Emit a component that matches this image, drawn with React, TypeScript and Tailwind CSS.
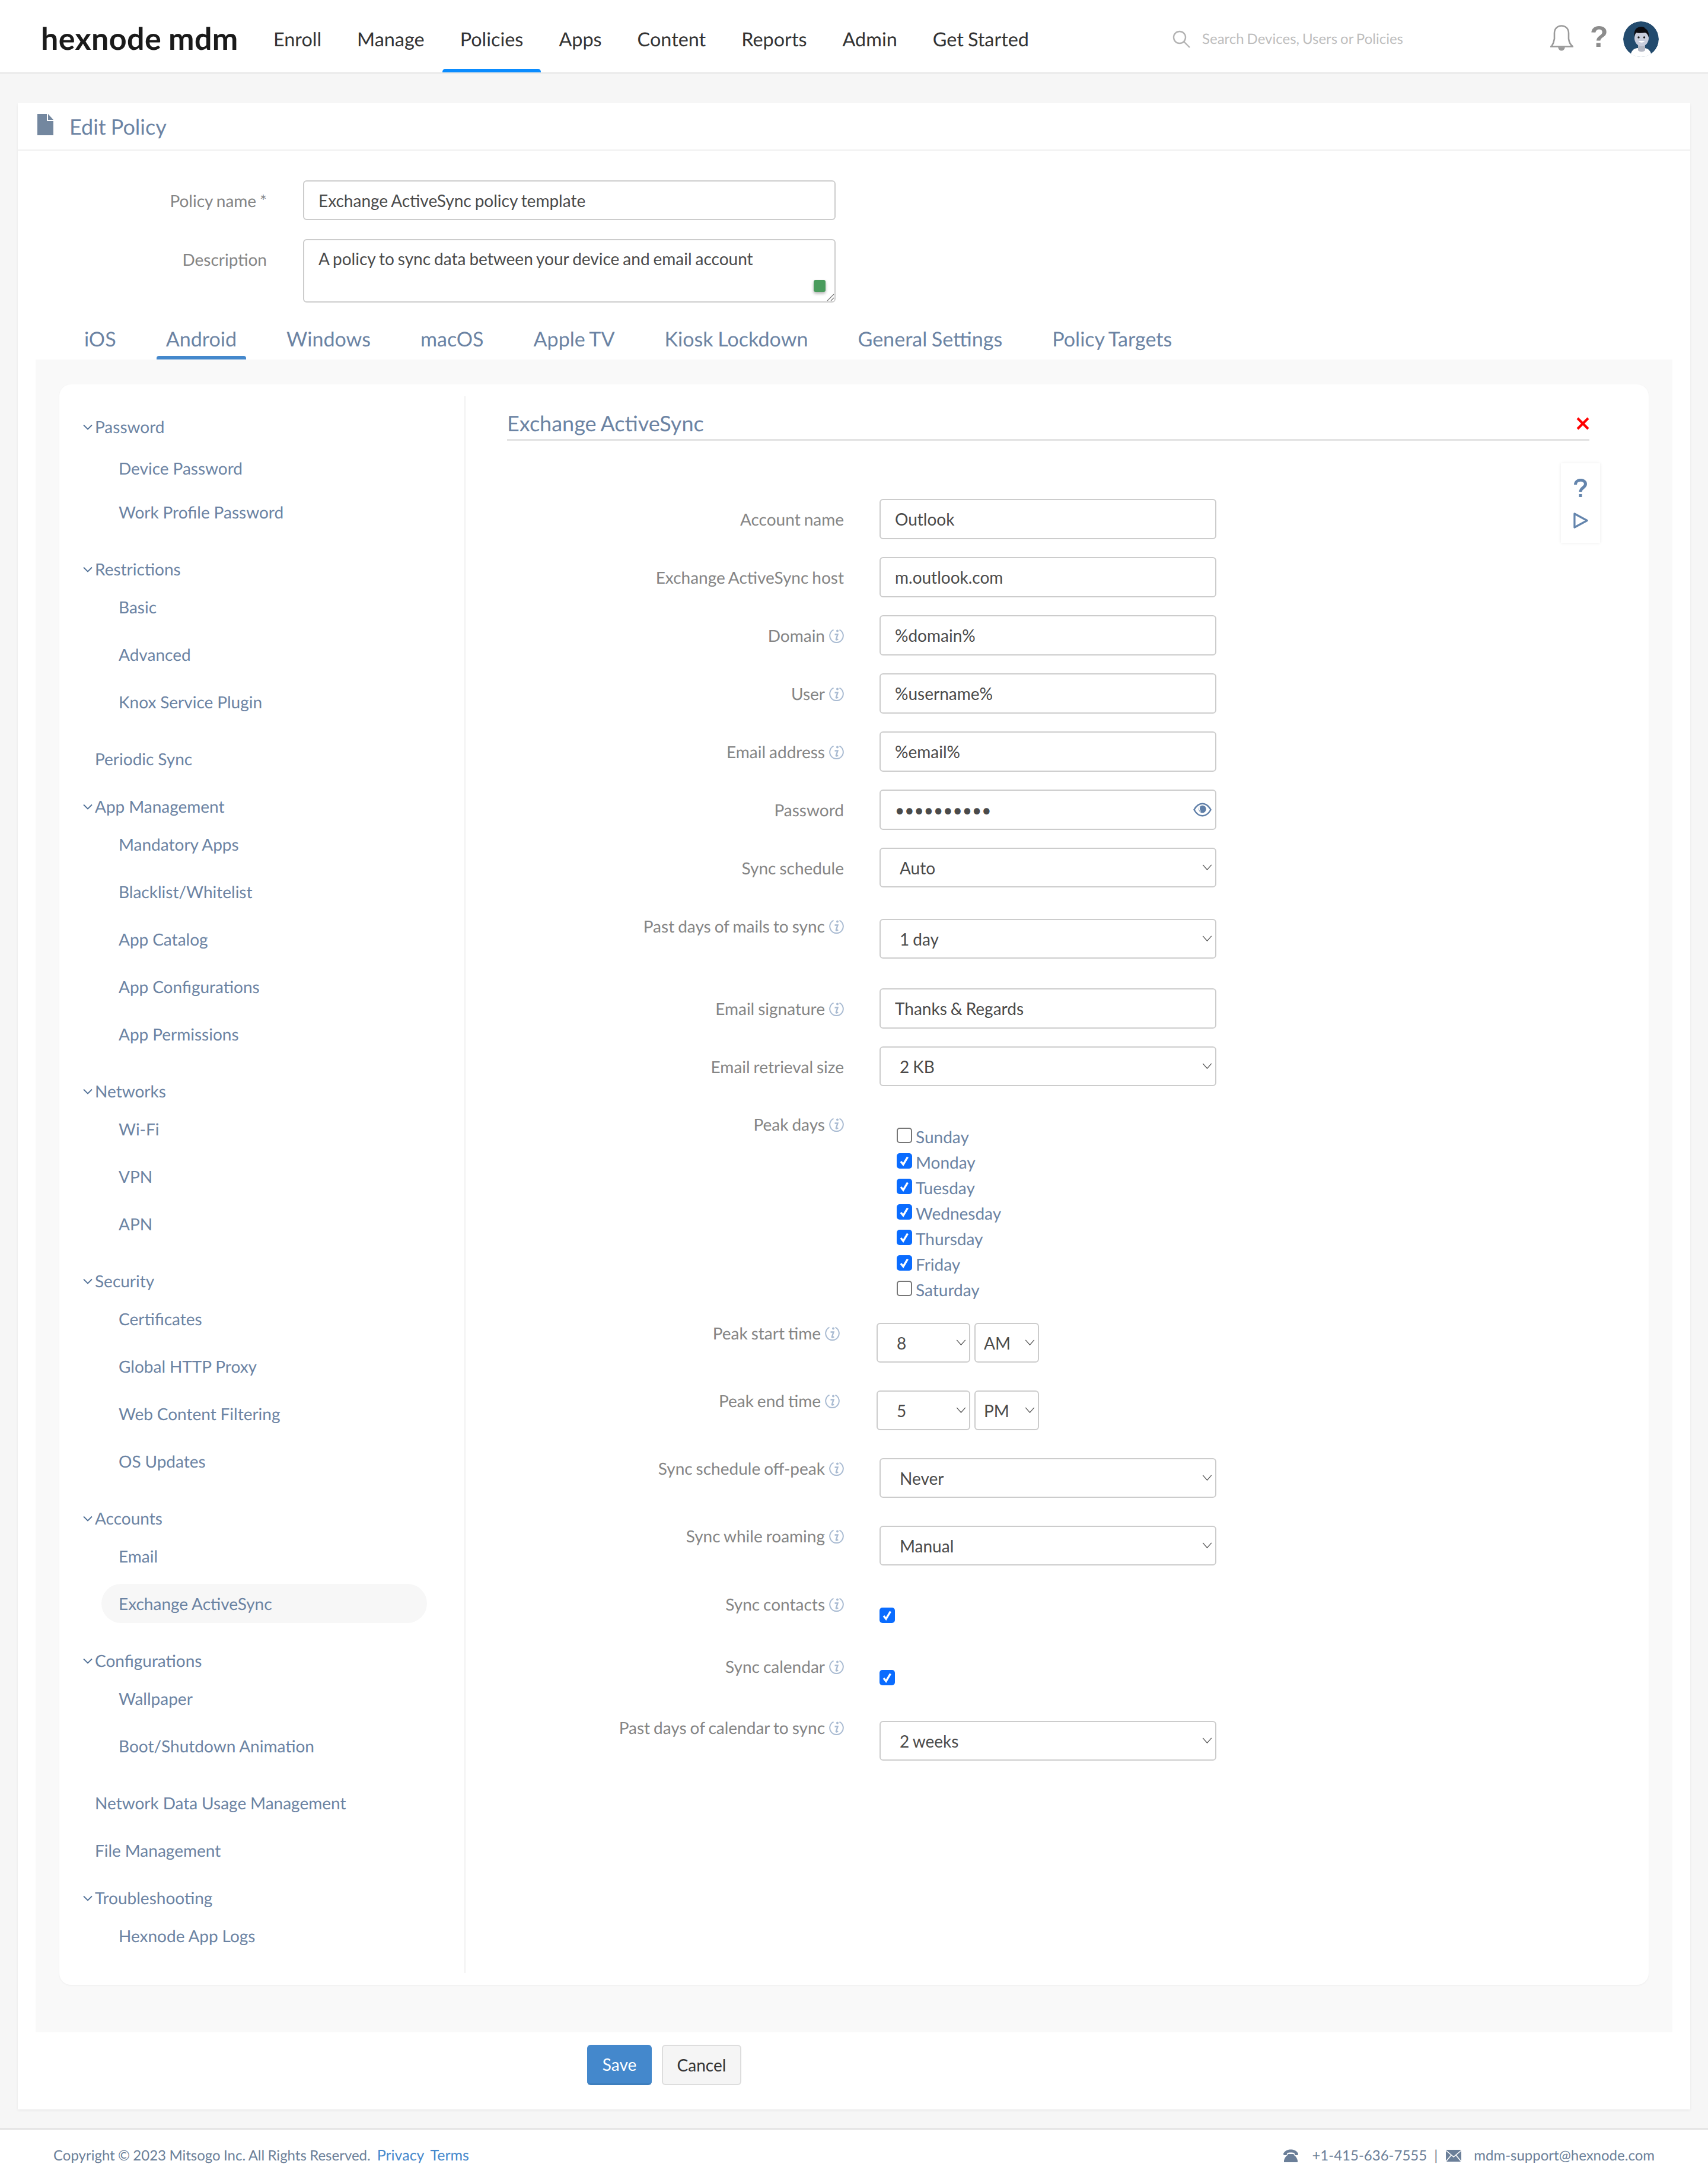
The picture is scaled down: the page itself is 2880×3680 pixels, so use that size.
import { ReactNode } from "react";

const navItems = ["Enroll", "Manage", "Policies", "Apps", "Content", "Reports", "Admin", "Get Started"];
const tabs = ["iOS", "Android", "Windows", "macOS", "Apple TV", "Kiosk Lockdown", "General Settings", "Policy Targets"];

const menu = [
  { title: "Restrictions", items: ["Basic", "Advanced", "Knox Service Plugin"] },
  { title: "Periodic Sync", items: [] },
  { title: "App Management", items: ["Mandatory Apps", "Blacklist/Whitelist", "App Catalog", "App Configurations", "App Permissions"] },
  { title: "Networks", items: ["Wi-Fi", "VPN", "APN"] },
  { title: "Security", items: ["Certificates", "Global HTTP Proxy", "Web Content Filtering", "OS Updates"] },
  { title: "Accounts", items: ["Email", "Exchange ActiveSync"] },
  { title: "Configurations", items: ["Wallpaper", "Boot/Shutdown Animation"] },
  { title: "Network Data Usage Management", items: [] },
  { title: "File Management", items: [] },
  { title: "Troubleshooting", items: ["Hexnode App Logs"] },
];

const days = [
  { name: "Sunday", on: false },
  { name: "Monday", on: true },
  { name: "Tuesday", on: true },
  { name: "Wednesday", on: true },
  { name: "Thursday", on: true },
  { name: "Friday", on: true },
  { name: "Saturday", on: false },
];

function MenuChevron() {
  return (
    <svg viewBox="0 0 16 10" className="w-[16px] h-[10px] absolute left-[-20px] top-[20px]" fill="none" stroke="#4f6f96" strokeWidth="1.8">
      <path d="M1 1.5 8 8.5 15 1.5" />
    </svg>
  );
}

function MenuHeading({ title, expandable }: { title: string; expandable: boolean }) {
  return (
    <div className="relative h-[48px] ml-[60px] flex items-center">
      {expandable && <MenuChevron />}
      {title}
    </div>
  );
}

function MenuItem({ label, active, className = "" }: { label: string; active?: boolean; className?: string }) {
  return (
    <div className={`h-[80px] flex items-center ${className}`}>
      <div className={`flex items-center h-[66px] w-[549px] ml-[71px] pl-[29px] rounded-full ${active ? "bg-[#f7f7f7]" : ""}`}>
        {label}
      </div>
    </div>
  );
}

function InfoIcon() {
  return (
    <svg viewBox="0 0 25 25" className="w-[25px] h-[25px] shrink-0" fill="none" stroke="#a9bbd2" strokeWidth="2">
      <path d="M7.5 2.6A11.3 11.3 0 1 0 17.5 2.6" />
      <circle cx="14" cy="4.5" r="2" fill="#a9bbd2" stroke="none" />
      <path d="M9.5 10.5h5l-2.6 8c-.3 1.2 1 1.4 3.4 0" strokeWidth="2.4" />
    </svg>
  );
}

function Row({ label, info, labelClass = "h-[68px]", children }: { label: string; info?: boolean; labelClass?: string; children: ReactNode }) {
  return (
    <div className="flex items-start">
      <div className={`w-[568px] flex items-center justify-end gap-[7px] text-[#858585] ${labelClass}`}>
        <span>{label}</span>
        {info && <InfoIcon />}
      </div>
      <div className="ml-[60px]">{children}</div>
    </div>
  );
}

function TextInput({ value, className = "" }: { value: string; className?: string }) {
  return (
    <input
      readOnly
      value={value}
      className={`block w-[568px] h-[68px] border-2 border-[#cccccc] rounded-[6px] px-[24px] text-[#4a4a4a] bg-white outline-none [word-spacing:-1.2px] ${className}`}
    />
  );
}

function SelectBox({ value, className = "w-[568px] h-[67px]", textClass = "pl-[32px]" }: { value: string; className?: string; textClass?: string }) {
  return (
    <div className={`relative ${className}`}>
      <select
        defaultValue={value}
        className={`block w-full h-full appearance-none border-2 border-[#cccccc] rounded-[6px] bg-white text-[#4a4a4a] outline-none [word-spacing:-1.2px] ${textClass}`}
      >
        <option>{value}</option>
      </select>
      <svg viewBox="0 0 18 11" className="absolute right-[7px] top-[28px] w-[17px] h-[10px]" fill="none" stroke="#555555" strokeWidth="1.5">
        <path d="M1 1 9 10 17 1" />
      </svg>
    </div>
  );
}

function CheckBox({ on }: { on: boolean }) {
  if (!on) {
    return <span className="block w-[26px] h-[26px] rounded-[5px] border-2 border-[#767676] bg-white" />;
  }
  return (
    <span className="flex items-center justify-center w-[26px] h-[26px] rounded-[5px] bg-[#0a6cff]">
      <svg viewBox="0 0 20 20" className="w-[20px] h-[20px]" fill="none" stroke="#ffffff" strokeWidth="3.4">
        <path d="M4 11 8 16 15.5 3.5" />
      </svg>
    </span>
  );
}

export default function App() {
  return (
    <div className="w-[2880px] min-h-[3680px] bg-[#f6f6f6] text-[28px] font-['Lato',sans-serif] [text-rendering:geometricPrecision] [word-spacing:-1.2px] flex flex-col">
      {/* top bar */}
      <header className="h-[124px] bg-white border-b-2 border-[#e6e6e6] flex items-start relative">
        <div className="ml-[69px] mt-[33px] w-[362px] text-[#1a1a1a] font-bold text-[52px] leading-[64px] tracking-[0.4px]">hexnode mdm</div>
        <nav className="flex h-[122px] text-[#333] text-[32.4px]">
          {navItems.map((n) => (
            <div key={n} className="relative px-[30px] pt-[10px] flex items-center">
              {n}
              {n === "Policies" && <span className="absolute left-0 right-0 bottom-0 h-[6px] rounded-t-[5px] bg-[#0a8cff]" />}
            </div>
          ))}
        </nav>
        <div className="ml-[212px] h-[122px] pt-[10px] flex items-center">
          <svg viewBox="0 0 30 30" className="w-[30px] h-[30px]" fill="none" stroke="#b3b3b3" strokeWidth="2.4">
            <circle cx="12" cy="12" r="10" />
            <path d="M19 19 29 29" />
          </svg>
          <span className="ml-[20px] text-[24px] text-[#bdbdbd]">Search Devices, Users or Policies</span>
        </div>
        <div className="absolute left-[2613px] top-[36px] flex items-start">
          <svg viewBox="0 0 40 44" className="w-[40px] h-[44px] mt-[6px]" fill="none" stroke="#9a9a9a" strokeWidth="2.6">
            <path d="M1 36.5h38c-4-3-6-6-7-13V14C32 6.5 27 1.5 20 1.5S8 6.5 8 14v9.500c-1 7-3 10-5 13" />
            <path d="M14 37.5c1 4 3 6 6 6s5-2 6-6z" fill="#9a9a9a" stroke="none" />
          </svg>
          <span className="ml-[28px] mt-[1px] text-[50px] leading-[50px] text-[#8c8c8c] font-bold font-['Liberation_Sans',sans-serif]">?</span>
          <svg viewBox="0 0 60 60" className="absolute left-[124px] top-[0px] w-[60px] h-[60px]">
            <defs>
              <clipPath id="avatar-clip"><circle cx="30" cy="30" r="30" /></clipPath>
            </defs>
            <g clipPath="url(#avatar-clip)">
              <circle cx="30" cy="30" r="30" fill="#234b6e" />
              <path d="M12 60c1-10 5-14 12-15h12c7 1 11 5 12 15z" fill="#ffffff" />
              <path d="M25 38h12v11c-3 3-9 3-12 0z" fill="#b4b8c4" />
              <ellipse cx="31" cy="28" rx="12" ry="14" fill="#c9cddc" />
              <path d="M19 27c-2-12 3-18 12-18 3 0 5 1 6 3 4 2 7 7 6 15-1-4-3-7-6-8-6 1-13 1-15 0-2 2-3 5-3 8z" fill="#0b0b10" />
              <circle cx="26" cy="27" r="1.7" fill="#1a1a1a" />
              <circle cx="35.5" cy="27" r="1.7" fill="#1a1a1a" />
              <path d="M25.5 33c3 3.500 8 3.500 11 0z" fill="#ffffff" />
            </g>
          </svg>
        </div>
      </header>

      <main className="mt-[50px] mx-[30px] min-h-[3382px] bg-white shadow-[0_2px_4px_rgba(0,0,0,0.06)]">
        {/* panel header */}
        <div className="h-[80px] border-b-2 border-[#f0f0f0] flex items-center pl-[33px] text-[#6b83a3] text-[36px]">
          <svg viewBox="0 0 27 36" className="w-[27px] h-[36px] -mt-[6px]">
            <path d="M0 0h16v12h11v24H0z" fill="#73879f" />
            <path d="M18 0l9 10h-9z" fill="#73879f" />
          </svg>
          <span className="ml-[27px]">Edit Policy</span>
        </div>

        {/* policy fields */}
        <div className="flex mt-[50px]">
          <div className="w-[420px] h-[68px] flex items-center justify-end text-[#858585]">Policy name *</div>
          <input readOnly value="Exchange ActiveSync policy template" className="block ml-[61px] w-[898px] h-[67px] border-2 border-[#cccccc] rounded-[6px] px-[24px] text-[#4a4a4a] outline-none [word-spacing:-1.2px]" />
        </div>
        <div className="flex mt-[31px]">
          <div className="w-[420px] h-[68px] flex items-center justify-end text-[#858585]">Description</div>
          <div className="relative ml-[61px] w-[898px] h-[107px]">
            <textarea readOnly value="A policy to sync data between your device and email account" className="block w-full h-full border-2 border-[#cccccc] rounded-[6px] px-[24px] py-[13px] text-[#4a4a4a] leading-[36px] outline-none resize-none [word-spacing:-1.2px]" />
            <span className="absolute left-[861px] top-[69px] w-[20px] h-[20px] rounded-[3px] bg-[#4a9c5d] shadow-[0_3px_5px_rgba(0,0,0,0.3)]" />
            <svg viewBox="0 0 14 14" className="absolute right-[2px] bottom-[2px] w-[14px] h-[14px]" fill="none" stroke="#777777" strokeWidth="1.2">
              <path d="M2 13 13 2M8 13 13 8" />
            </svg>
          </div>
        </div>

        {/* tabs */}
        <div className="flex gap-[52px] mt-[37px] ml-[96px] h-[59px] text-[#6b83a3] text-[34.1px]">
          {tabs.map((t) => (
            <div key={t} className="relative px-[16px] flex items-center pb-[10px]">
              {t}
              {t === "Android" && <span className="absolute left-0 right-0 bottom-0 h-[6px] rounded-t-[4px] bg-[#4488cc]" />}
            </div>
          ))}
        </div>

        {/* settings area */}
        <div className="mx-[30px] min-h-[2820px] bg-[#f9f9f9] pt-[42px] px-[40px]">
          <div className="flex h-[2698px] bg-white rounded-[20px] shadow-[0_1px_3px_rgba(0,0,0,0.05)] py-[20px]">
            <aside className="w-[685px] border-r-2 border-[#f2f2f2] text-[#6b83a3] pt-[27px] [word-spacing:-0.3px]">
              <div className="mb-[32px]">
                <MenuHeading title="Password" expandable />
                <MenuItem label="Device Password" className="mt-[6px]" />
                <MenuItem label="Work Profile Password" className="-mt-[6px]" />
              </div>
              {menu.map((m) => (
                <div key={m.title} className="mb-[32px]">
                  <MenuHeading title={m.title} expandable={m.items.length > 0} />
                  {m.items.map((i) => (
                    <MenuItem key={i} label={i} active={i === "Exchange ActiveSync"} />
                  ))}
                </div>
              ))}
            </aside>

            <section className="relative flex-1 pl-[70px] pt-[20px]">
              <div className="w-[1825px] h-[55px] border-b-[3px] border-[#e3e3e3] text-[36px] leading-[50px] text-[#6b83a3]">Exchange ActiveSync</div>
              <svg viewBox="0 0 22 22" className="absolute left-[1873px] top-[35px] w-[22px] h-[22px]" fill="none" stroke="#ff0000" strokeWidth="4.2">
                <path d="M2 2 20 20M20 2 2 20" />
              </svg>
              <div className="absolute left-[1847px] top-[113px] w-[66px] h-[134px] bg-white shadow-[0_0_6px_rgba(0,0,0,0.08)] flex flex-col items-center">
                <svg viewBox="0 0 22 32" className="w-[22px] h-[32px] mt-[26px]" fill="none" stroke="#6485ad" strokeWidth="5">
                  <path d="M2.500 10c0-10 17-10 17-1 0 6-8.500 6-8.500 13" />
                  <path d="M11 26v5" />
                </svg>
                <svg viewBox="0 0 26 28" className="w-[25px] h-[27px] mt-[25px]" fill="none" stroke="#6485ad" strokeWidth="3.4" strokeLinejoin="round">
                  <path d="M2 2 24 14 2 26z" />
                </svg>
              </div>

              <div className="mt-[98px] flex flex-col">
                <Row label="Account name"><TextInput value="Outlook" /></Row>
                <div className="mt-[30px]"><Row label="Exchange ActiveSync host"><TextInput value="m.outlook.com" /></Row></div>
                <div className="mt-[30px]"><Row label="Domain" info><TextInput value="%domain%" /></Row></div>
                <div className="mt-[30px]"><Row label="User" info><TextInput value="%username%" /></Row></div>
                <div className="mt-[30px]"><Row label="Email address" info><TextInput value="%email%" /></Row></div>
                <div className="mt-[30px]">
                  <Row label="Password">
                    <div className="relative">
                      <input readOnly type="password" value="0123456789" className="block w-[568px] h-[68px] border-2 border-[#cccccc] rounded-[6px] px-[24px] text-[#4a4a4a] outline-none" />
                      <svg viewBox="0 0 32 26" className="absolute left-[529px] top-[21px] w-[31px] h-[26px]" fill="none" stroke="#5f7fa8" strokeWidth="2.6">
                        <path d="M1.5 13C6 5 11 2.500 16 2.500S26 5 30.5 13C26 21 21 23.5 16 23.5S6 21 1.500 13z" />
                        <circle cx="16" cy="12" r="6.5" fill="#5f7fa8" stroke="none" />
                        <path d="M12 7c-2 2-2 7 1 9" stroke="#ffffff" strokeWidth="1.4" />
                      </svg>
                    </div>
                  </Row>
                </div>
                <div className="mt-[30px]"><Row label="Sync schedule"><SelectBox value="Auto" /></Row></div>
                <div className="mt-[52px]"><Row label="Past days of mails to sync" info labelClass="h-[40px] -mt-[8px]"><SelectBox value="1 day" /></Row></div>
                <div className="mt-[50px]"><Row label="Email signature" info><TextInput value="Thanks & Regards" /></Row></div>
                <div className="mt-[30px]"><Row label="Email retrieval size"><SelectBox value="2 KB" /></Row></div>
                <div className="mt-[60px]">
                  <Row label="Peak days" info labelClass="h-[40px] -mt-[17px]">
                    <div className="ml-[29px] text-[#6b83a3]">
                      {days.map((d) => (
                        <div key={d.name} className="h-[43px] flex items-center">
                          <CheckBox on={d.on} />
                          <span className="ml-[6px] mt-[5px]">{d.name}</span>
                        </div>
                      ))}
                    </div>
                  </Row>
                </div>
                <div className="mt-[37px]">
                  <Row label="Peak start time" info labelClass="h-[40px] pr-[7px] -mt-[3px]">
                    <div className="flex gap-[7px] -ml-[5px]">
                      <SelectBox value="8" className="w-[158px] h-[67px]" />
                      <SelectBox value="AM" className="w-[109px] h-[67px]" textClass="pl-[14px]" />
                    </div>
                  </Row>
                </div>
                <div className="mt-[47px]">
                  <Row label="Peak end time" info labelClass="h-[40px] pr-[7px] -mt-[3px]">
                    <div className="flex gap-[7px] -ml-[5px]">
                      <SelectBox value="5" className="w-[158px] h-[67px]" />
                      <SelectBox value="PM" className="w-[109px] h-[67px]" textClass="pl-[14px]" />
                    </div>
                  </Row>
                </div>
                <div className="mt-[47px]"><Row label="Sync schedule off-peak" info labelClass="h-[40px] -mt-[3px]"><SelectBox value="Never" /></Row></div>
                <div className="mt-[47px]"><Row label="Sync while roaming" info labelClass="h-[40px] -mt-[3px]"><SelectBox value="Manual" /></Row></div>
                <div className="mt-[71px]"><Row label="Sync contacts" info labelClass="h-[40px] -mt-[26px]"><CheckBox on /></Row></div>
                <div className="mt-[79px]"><Row label="Sync calendar" info labelClass="h-[40px] -mt-[26px]"><CheckBox on /></Row></div>
                <div className="mt-[60px]"><Row label="Past days of calendar to sync" info labelClass="h-[40px] -mt-[9px]"><SelectBox value="2 weeks" /></Row></div>
              </div>
            </section>
          </div>
        </div>

        {/* actions */}
        <div className="flex ml-[960px] mt-[21px] gap-[17px]">
          <button className="w-[109px] h-[68px] rounded-[6px] bg-[#4488cc] border-b-[3px] border-[#3c7dbd] text-white">Save</button>
          <button className="w-[134px] h-[68px] rounded-[6px] bg-[#f5f5f5] border-2 border-[#dddddd] text-[#333]">Cancel</button>
        </div>
      </main>

      {/* footer */}
      <footer className="mt-[32px] h-[92px] pb-[2px] bg-white border-t-2 border-[#dddddd] flex items-center justify-between pl-[90px] pr-[90px] text-[24px] text-[#6b7f99]">
        <div className="flex items-center [word-spacing:-0.8px]">
          <span>Copyright © 2023 Mitsogo Inc. All Rights Reserved.</span>
          <span className="ml-[11px] text-[25px] text-[#4488cc]">Privacy</span>
          <span className="ml-[10px] text-[25px] text-[#4488cc]">Terms</span>
        </div>
        <div className="flex items-center">
          <svg viewBox="0 0 25 22" className="w-[25px] h-[22px]" fill="#6b7f99">
            <path d="M0 7.500C3 2 8 0.500 12.500 0.500S22 2 25 7.500l-.5 2.500h-5l-1-3.500c-3-1.200-9-1.200-12 0l-1 3.500h-5z" />
            <path d="M1 22v-3c1-4 3-7 6-9 0-1 1-2 1-2h9s1 1 1 2c3 2 5 5 6 9v3z" />
          </svg>
          <span className="ml-[23px]">+1-415-636-7555</span>
          <span className="ml-[12px]">|</span>
          <svg viewBox="0 0 26 20" className="ml-[14px] w-[26px] h-[20px]">
            <rect width="26" height="20" fill="#6b7f99" />
            <path d="M0 1 13 12 26 1M0 20 9 9M26 20 17 9" fill="none" stroke="#ffffff" strokeWidth="1.6" />
          </svg>
          <span className="ml-[21px]">mdm-support@hexnode.com</span>
        </div>
      </footer>
    </div>
  );
}
